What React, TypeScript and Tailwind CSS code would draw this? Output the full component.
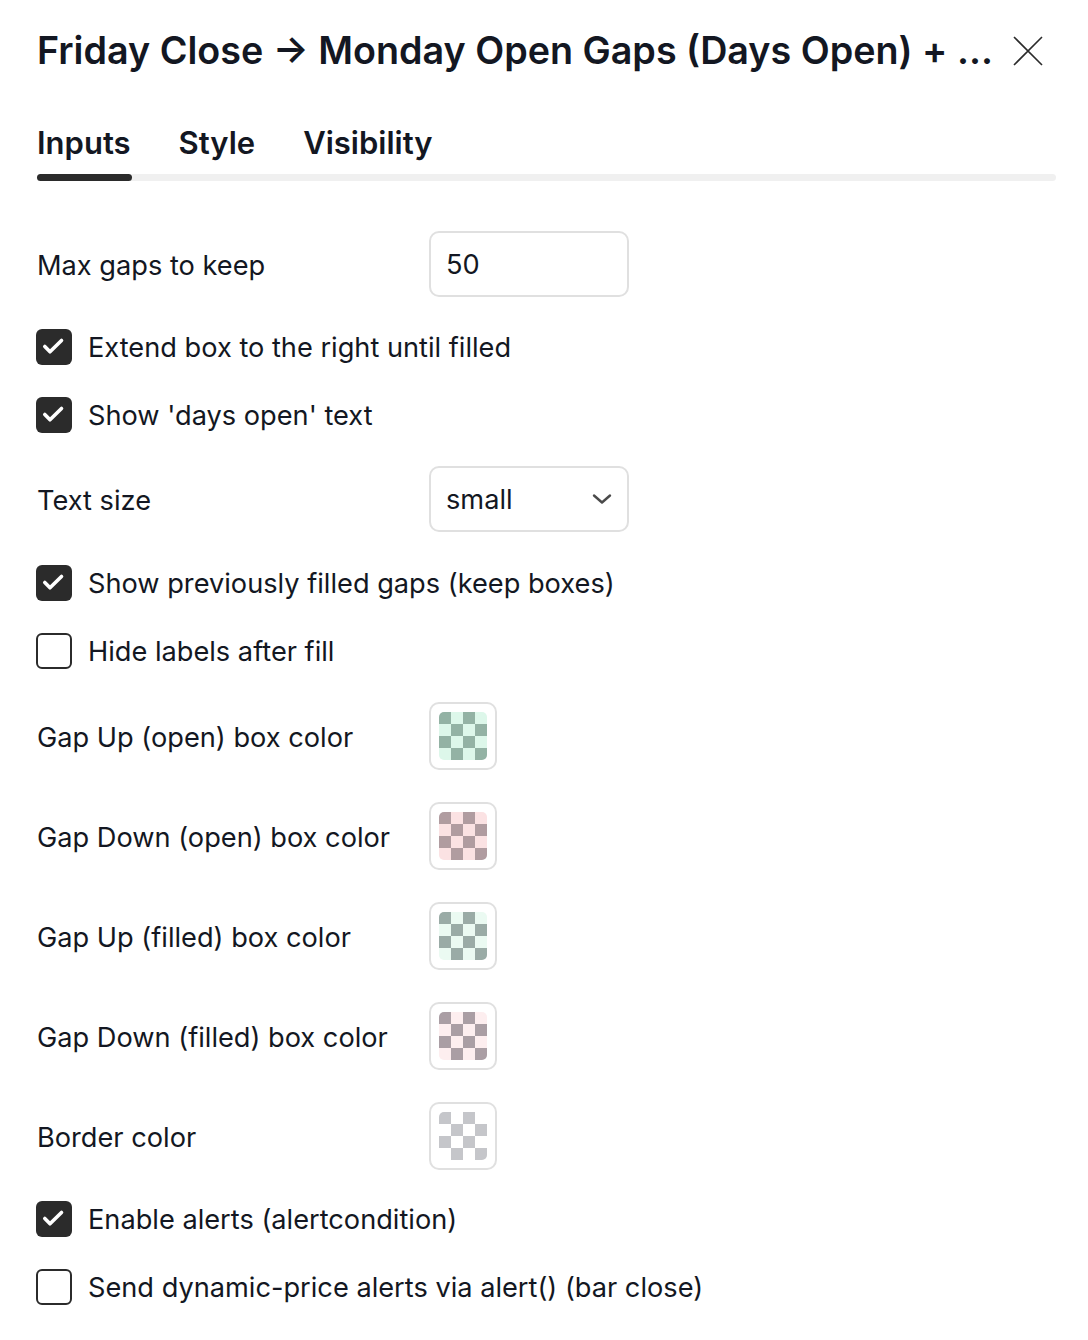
import React from "react";

const FONT = { fontFamily: "Inter, 'Noto Sans', sans-serif" };

function Check({ checked }: { checked: boolean }) {
  return checked ? (
    <div className="w-[36px] h-[36px] rounded-[6px] bg-[#2b2b2b] flex items-center justify-center shrink-0 ml-[-1px]">
      <svg width="24" height="24" viewBox="0 0 24 24" fill="none">
        <path d="M2.8 11.5 L8 16.8 L19.5 5.5" stroke="#ffffff" strokeWidth="3.6" strokeLinecap="round" strokeLinejoin="round" />
      </svg>
    </div>
  ) : (
    <div className="w-[36px] h-[36px] rounded-[6px] border-2 border-[#2b2b2b] bg-white shrink-0 ml-[-1px]" />
  );
}

function CheckRow({ checked, label }: { checked: boolean; label: string }) {
  return (
    <div className="flex items-center h-[36px]">
      <Check checked={checked} />
      <span className="ml-[16px] pt-[2px] text-[27.2px] text-[#131722] leading-none">{label}</span>
    </div>
  );
}

function LabelRow({ label, children, h }: { label: string; children: React.ReactNode; h: string }) {
  return (
    <div className={`flex items-center ${h}`}>
      <span className="w-[392px] pt-[3px] text-[27.2px] text-[#131722] leading-none">{label}</span>
      {children}
    </div>
  );
}

type Sw = { dark: string; light: string };

function Swatch({ dark, light }: Sw) {
  const cells = [];
  for (let r = 0; r < 4; r++) {
    for (let c = 0; c < 4; c++) {
      cells.push(<div key={`${r}-${c}`} className={(r + c) % 2 === 0 ? dark : light} />);
    }
  }
  return (
    <div className="w-[68px] h-[68px] rounded-[10px] border-2 border-[#e0e0e0] flex items-center justify-center bg-white">
      <div className="w-[48px] h-[48px] rounded-[5px] overflow-hidden grid grid-cols-4 grid-rows-4">{cells}</div>
    </div>
  );
}

const swatches: { label: string; sw: Sw }[] = [
  { label: "Gap Up (open) box color", sw: { dark: "bg-[#93b2a4]", light: "bg-[#ddf7ea]" } },
  { label: "Gap Down (open) box color", sw: { dark: "bg-[#b09ca0]", light: "bg-[#fbe2e3]" } },
  { label: "Gap Up (filled) box color", sw: { dark: "bg-[#9aaba6]", light: "bg-[#ebfaf2]" } },
  { label: "Gap Down (filled) box color", sw: { dark: "bg-[#aa9ea4]", light: "bg-[#fdeeef]" } },
  { label: "Border color", sw: { dark: "bg-[#c5c6ca]", light: "bg-white" } },
];

export default function App() {
  return (
    <div className="w-[1088px] h-[1340px] bg-white overflow-hidden" style={FONT}>
      <div className="pl-[37px] pr-[32px]">
        {/* Header */}
        <div className="flex items-center justify-between h-[102px] pb-[1px]">
          <h1 className="text-[37.7px] font-semibold text-[#131722] tracking-[0px] whitespace-nowrap leading-none">
            Friday Close → Monday Open Gaps (Days Open) + ...
          </h1>
          <svg width="32" height="32" viewBox="0 0 32 32" className="mr-[12px] shrink-0" fill="none">
            <path d="M2 2 L30 30 M30 2 L2 30" stroke="#2b2b2b" strokeWidth="1.6" />
          </svg>
        </div>

        {/* Tabs */}
        <div className="flex gap-[48px] h-[72px] items-end pb-[16px]">
          <span className="text-[31px] font-semibold text-[#131722] leading-none">Inputs</span>
          <span className="text-[31px] font-semibold text-[#131722] leading-none">Style</span>
          <span className="text-[31px] font-semibold text-[#131722] leading-none">Visibility</span>
        </div>
        <div className="h-[7px] rounded-full bg-[#f0f0f0] relative">
          <div className="absolute left-0 top-0 h-[7px] w-[95px] rounded-full bg-[#2b2b2b]" />
        </div>

        {/* Body */}
        <div className="flex flex-col mt-[50px]">
          <LabelRow label="Max gaps to keep" h="h-[66px]">
            <div className="w-[200px] h-[66px] rounded-[10px] border-2 border-[#e0e0e0] flex items-center px-[15px] pt-[2px] text-[27.2px] text-[#131722]">
              50
            </div>
          </LabelRow>
          <div className="mt-[32px]">
            <CheckRow checked label="Extend box to the right until filled" />
          </div>
          <div className="mt-[32px]">
            <CheckRow checked label="Show 'days open' text" />
          </div>
          <div className="mt-[33px]">
            <LabelRow label="Text size" h="h-[66px]">
              <div className="w-[200px] h-[66px] rounded-[10px] border-2 border-[#e0e0e0] flex items-center justify-between pl-[15px] pr-[14px] text-[27.2px] text-[#131722]">
                <span className="pt-[2px]">small</span>
                <svg width="22" height="14" viewBox="0 0 22 14" fill="none">
                  <path d="M3 3.5 L11 10.5 L19 3.5" stroke="#4a4a4a" strokeWidth="2.4" strokeLinecap="round" strokeLinejoin="round" />
                </svg>
              </div>
            </LabelRow>
          </div>
          <div className="mt-[33px]">
            <CheckRow checked label="Show previously filled gaps (keep boxes)" />
          </div>
          <div className="mt-[32px]">
            <CheckRow checked={false} label="Hide labels after fill" />
          </div>
          {swatches.map((s, i) => (
            <div key={s.label} className={i === 0 ? "mt-[33px]" : "mt-[32px]"}>
              <LabelRow label={s.label} h="h-[68px]">
                <Swatch {...s.sw} />
              </LabelRow>
            </div>
          ))}
          <div className="mt-[31px]">
            <CheckRow checked label="Enable alerts (alertcondition)" />
          </div>
          <div className="mt-[32px]">
            <CheckRow checked={false} label="Send dynamic-price alerts via alert() (bar close)" />
          </div>
        </div>
      </div>
    </div>
  );
}
